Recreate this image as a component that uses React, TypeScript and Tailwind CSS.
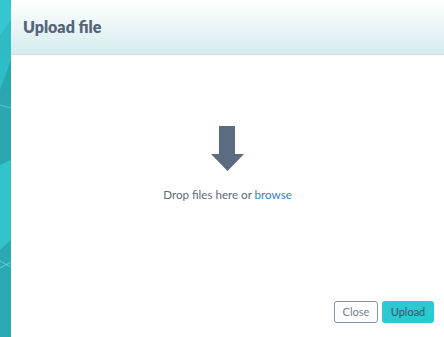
export default function App() {
  return (
    <div className="flex h-[337px] w-[444px] overflow-hidden" style={{ fontFamily: 'Lato, "Open Sans", sans-serif' }}>
      {/* teal backdrop strip */}
      <div className="relative w-[11px] shrink-0 bg-gradient-to-b from-[#2fb8c2] via-[#2ec4cc] to-[#2a9fa8]">
        <svg width="11" height="337" className="absolute inset-0">
          <polygon points="0,0 11,0 11,20 0,35" fill="#35c6cf" />
          <polygon points="0,90 11,60 11,160 0,165" fill="#2aa6ae" />
          <polygon points="0,165 11,160 11,240 0,250" fill="#33c3cb" />
          <polygon points="0,250 11,240 11,337 0,337" fill="#2ba9b2" />
          <line x1="0" y1="105" x2="11" y2="108" stroke="#7fdde2" strokeWidth="0.6" />
          <line x1="0" y1="261" x2="11" y2="267" stroke="#8fe2e6" strokeWidth="0.6" />
          <line x1="0" y1="268" x2="11" y2="262" stroke="#8fe2e6" strokeWidth="0.6" />
        </svg>
      </div>

      <div className="flex flex-1 flex-col bg-white">
        <div className="flex h-[55px] items-center border-b border-[#cfe3e6] bg-gradient-to-b from-white to-[#d6ebee] pl-[12px]">
          <h1 className="text-[16px] font-extrabold text-[#56657a]">Upload file</h1>
        </div>

        <div className="flex flex-1 flex-col items-center pt-[71px]">
          <svg width="34" height="46" viewBox="0 0 34 46">
            <polygon points="8,0 24,0 24,28 33,28 16.5,45 0,28 8,28" fill="#5b6b80" />
          </svg>
          <p className="mt-[14px] text-[11.6px] text-[#5b6b80]">
            Drop files here or <span className="text-[#2f7fd8]">browse</span>
          </p>
        </div>

        <div className="flex justify-end gap-[4px] pb-[14px] pr-[10px]">
          <button className="h-[22px] w-[44px] rounded-[3px] border border-[#8593a6] bg-white text-[11px] text-[#6f7d90]">
            Close
          </button>
          <button className="h-[22px] w-[52px] rounded-[3px] bg-[#2ec8d2] text-[11px] text-[#3c5566]">
            Upload
          </button>
        </div>
      </div>
    </div>
  );
}
